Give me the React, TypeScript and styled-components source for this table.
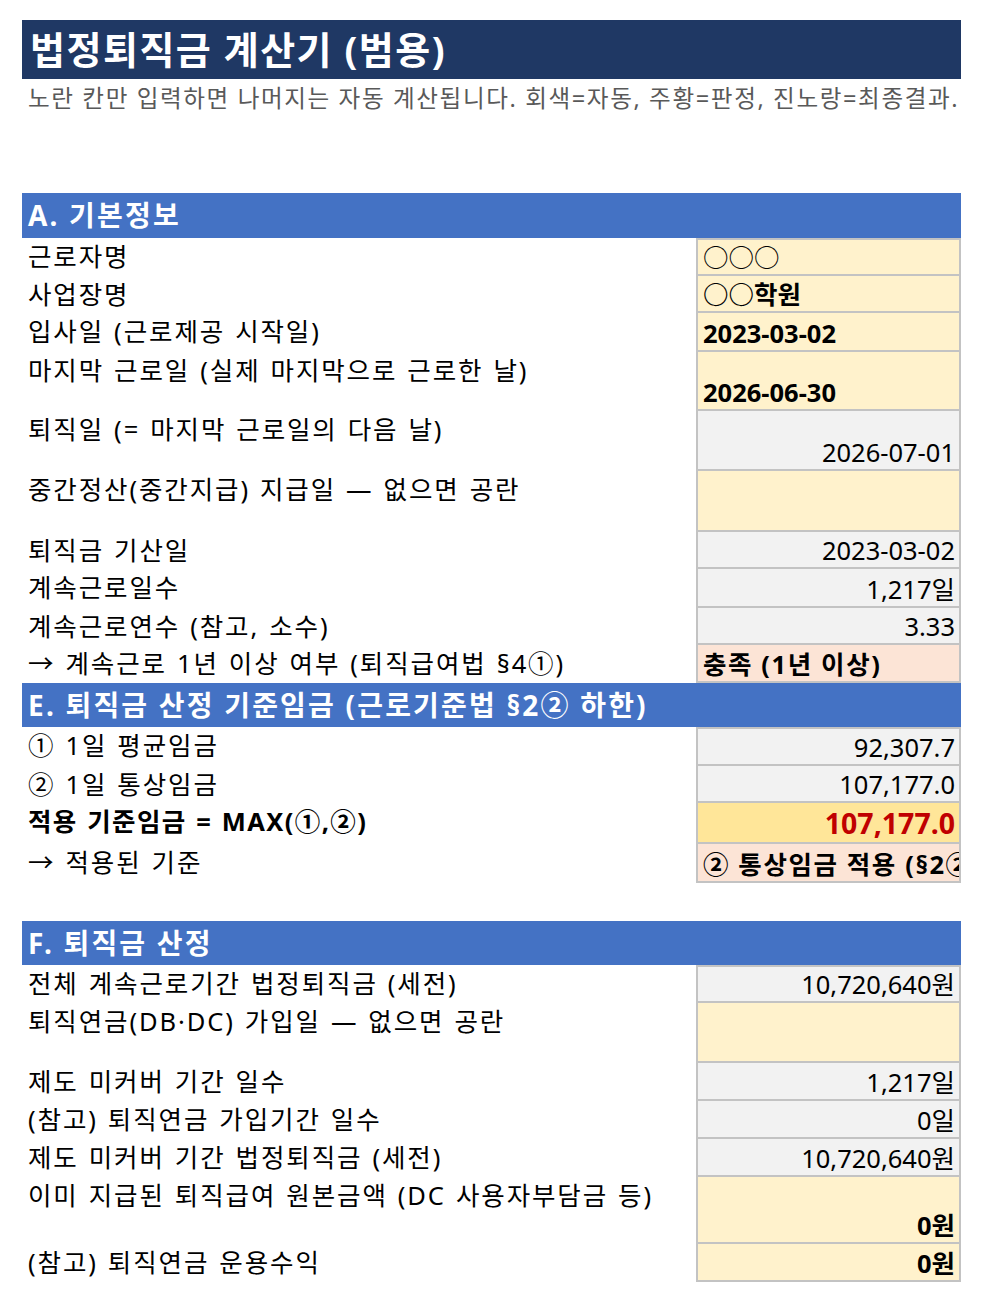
import React from "react";
import styled, { createGlobalStyle } from "styled-components";

const Global = createGlobalStyle`
  html, body { margin: 0; padding: 0; background: #ffffff; }
  body { font-family: "Noto Sans", "Noto Sans CJK KR", sans-serif; color: #000; }
`;

const Sheet = styled.div`
  width: 939px;
  padding: 20px 0 24px 22px;
  display: flex;
  flex-direction: column;
`;

const TitleBar = styled.div`
  height: 59px;
  background: #1f3864;
  color: #ffffff;
  font-weight: 700;
  font-size: 38px;
  line-height: 59px;
  letter-spacing: 1.5px;
  padding-left: 8px;
  box-sizing: border-box;
  white-space: nowrap;
`;

const Subtitle = styled.div`
  height: 38px;
  color: #595959;
  font-size: 23.6px;
  line-height: 38px;
  letter-spacing: 1.6px;
  padding-left: 6px;
  white-space: nowrap;
`;

const Spacer = styled.div<{ $h: number }>`
  height: ${(p) => p.$h}px;
`;

const SectionHeader = styled.div<{ $h: number }>`
  height: ${(p) => p.$h}px;
  background: #4472c4;
  color: #ffffff;
  font-weight: 700;
  font-size: 28px;
  line-height: ${(p) => p.$h}px;
  letter-spacing: 2.2px;
  padding-left: 6px;
  box-sizing: border-box;
  white-space: nowrap;
`;

const Row = styled.div<{ $h: number }>`
  display: grid;
  grid-template-columns: 1fr 265px;
  height: ${(p) => p.$h}px;
`;

const Label = styled.div<{ $bold?: boolean }>`
  font-size: 25.5px;
  line-height: 36px;
  letter-spacing: ${(p) => (p.$bold ? 1.4 : 1.9)}px;
  word-spacing: 1.5px;
  padding-left: 6px;
  font-weight: ${(p) => (p.$bold ? 700 : 400)};
  white-space: nowrap;
`;

type Tone = "input" | "auto" | "verdict" | "final";
const bg: Record<Tone, string> = {
  input: "#fff2cc",
  auto: "#f2f2f2",
  verdict: "#fce4d6",
  final: "#ffe699",
};

const Value = styled.div<{
  $tone: Tone;
  $first?: boolean;
  $right?: boolean;
  $bold?: boolean;
  $red?: boolean;
}>`
  box-sizing: border-box;
  background: ${(p) => bg[p.$tone]};
  border: 2px solid #c3c3c3;
  border-top-width: ${(p) => (p.$first ? 2 : 0)}px;
  display: flex;
  align-items: flex-end;
  justify-content: ${(p) => (p.$right ? "flex-end" : "flex-start")};
  padding: 0 4px 0 5px;
  font-size: ${(p) => (p.$red ? 28.5 : 25.5)}px;
  line-height: ${(p) => (p.$red ? 37 : 34)}px;
  font-weight: ${(p) => (p.$bold ? 700 : 400)};
  color: ${(p) => (p.$red ? "#c00000" : "#000")};
  white-space: nowrap;
  overflow: hidden;
`;

const Spaced = styled.span`
  letter-spacing: 1.6px;
`;

type Item = {
  label: string;
  h: number;
  tone: Tone;
  value?: string;
  right?: boolean;
  bold?: boolean;
  red?: boolean;
  labelBold?: boolean;
  korean?: boolean;
};

const sectionA: Item[] = [
  { label: "근로자명", h: 38, tone: "input", value: "○○○" },
  { label: "사업장명", h: 37, tone: "input", value: "○○학원", bold: true },
  { label: "입사일 (근로제공 시작일)", h: 39, tone: "input", value: "2023-03-02", bold: true },
  { label: "마지막 근로일 (실제 마지막으로 근로한 날)", h: 59, tone: "input", value: "2026-06-30", bold: true },
  { label: "퇴직일 (= 마지막 근로일의 다음 날)", h: 60, tone: "auto", value: "2026-07-01", right: true },
  { label: "중간정산(중간지급) 지급일 — 없으면 공란", h: 61, tone: "input" },
  { label: "퇴직금 기산일", h: 37, tone: "auto", value: "2023-03-02", right: true },
  { label: "계속근로일수", h: 39, tone: "auto", value: "1,217일", right: true },
  { label: "계속근로연수 (참고, 소수)", h: 37, tone: "auto", value: "3.33", right: true },
  { label: "→ 계속근로 1년 이상 여부 (퇴직급여법 §4①)", h: 38, tone: "verdict", value: "충족 (1년 이상)", bold: true, korean: true },
];

const sectionE: Item[] = [
  { label: "① 1일 평균임금", h: 39, tone: "auto", value: "92,307.7", right: true },
  { label: "② 1일 통상임금", h: 37, tone: "auto", value: "107,177.0", right: true },
  { label: "적용 기준임금 = MAX(①,②)", h: 41, tone: "final", value: "107,177.0", right: true, bold: true, red: true, labelBold: true },
  { label: "→ 적용된 기준", h: 39, tone: "verdict", value: "② 통상임금 적용 (§2② 하한)", bold: true, korean: true },
];

const sectionF: Item[] = [
  { label: "전체 계속근로기간 법정퇴직금 (세전)", h: 38, tone: "auto", value: "10,720,640원", right: true },
  { label: "퇴직연금(DB·DC) 가입일 — 없으면 공란", h: 60, tone: "input" },
  { label: "제도 미커버 기간 일수", h: 38, tone: "auto", value: "1,217일", right: true },
  { label: "(참고) 퇴직연금 가입기간 일수", h: 38, tone: "auto", value: "0일", right: true },
  { label: "제도 미커버 기간 법정퇴직금 (세전)", h: 38, tone: "auto", value: "10,720,640원", right: true },
  { label: "이미 지급된 퇴직급여 원본금액 (DC 사용자부담금 등)", h: 67, tone: "input", value: "0원", right: true, bold: true },
  { label: "(참고) 퇴직연금 운용수익", h: 38, tone: "input", value: "0원", right: true, bold: true },
];

const Rows: React.FC<{ items: Item[] }> = ({ items }) => (
  <>
    {items.map((it, i) => (
      <Row key={i} $h={it.h}>
        <Label $bold={it.labelBold}>{it.label}</Label>
        <Value
          $tone={it.tone}
          $first={i === 0}
          $right={it.right}
          $bold={it.bold}
          $red={it.red}
        >
          {it.korean ? <Spaced>{it.value}</Spaced> : it.value ?? ""}
        </Value>
      </Row>
    ))}
  </>
);

export default function App() {
  return (
    <>
      <Global />
      <Sheet>
        <TitleBar>법정퇴직금 계산기 (범용)</TitleBar>
        <Subtitle>
          노란 칸만 입력하면 나머지는 자동 계산됩니다. 회색=자동, 주황=판정, 진노랑=최종결과.
        </Subtitle>
        <Spacer $h={76} />
        <SectionHeader $h={45}>A. 기본정보</SectionHeader>
        <Rows items={sectionA} />
        <SectionHeader $h={44}>E. 퇴직금 산정 기준임금 (근로기준법 §2② 하한)</SectionHeader>
        <Rows items={sectionE} />
        <Spacer $h={38} />
        <SectionHeader $h={44}>F. 퇴직금 산정</SectionHeader>
        <Rows items={sectionF} />
      </Sheet>
    </>
  );
}
